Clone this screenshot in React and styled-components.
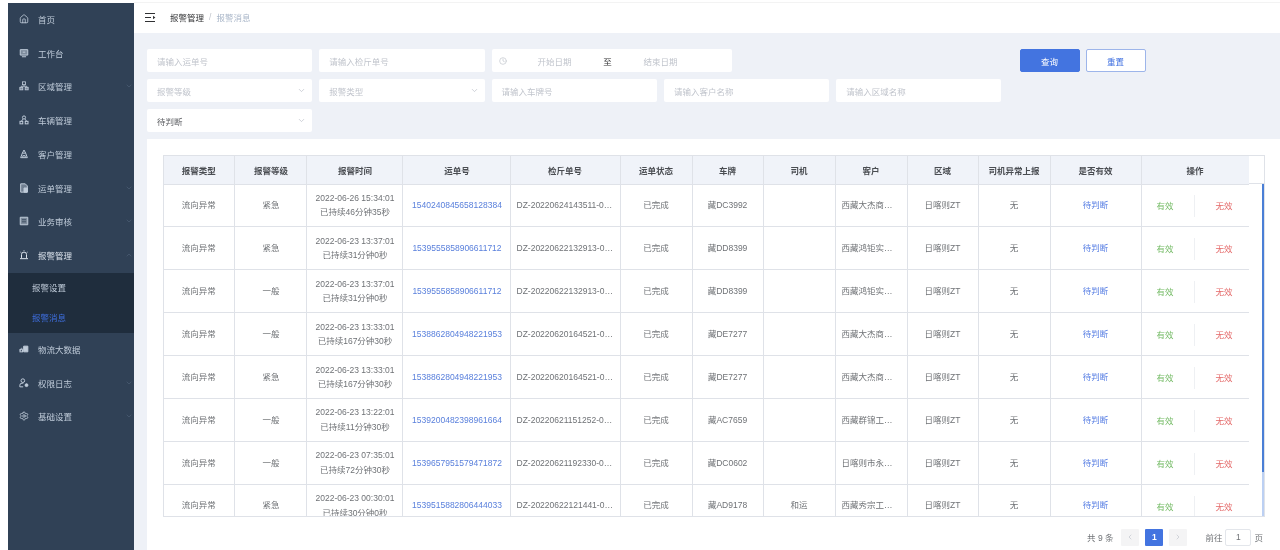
import React from 'react';
import styled, { createGlobalStyle } from 'styled-components';
import { House, Settings, ChevronDown, ChevronUp, ChevronLeft, ChevronRight, Clock } from 'lucide-react';

const GlobalStyle = createGlobalStyle`
    html, body {
        margin: 0;
        padding: 0;
        background: #fff;
        overflow: hidden;
    }
    * {
        box-sizing: border-box;
    }
    body {
        font-family: "Liberation Sans", "Noto Sans CJK SC", sans-serif;
        font-size: 8.5px;
        color: #6f7276;
    }
`;

const Page = styled.div`
    width: 1280px;
    height: 550px;
    display: flex;
    padding: 2px 0 0 8px;
    overflow: hidden;
    filter: blur(0.5px);
`;

const Sidebar = styled.aside`
    width: 126px;
    flex-shrink: 0;
    margin-top: 1px;
    background: #304156;
    display: flex;
    flex-direction: column;
`;

const MenuItem = styled.div`
    height: 33.75px;
    display: flex;
    align-items: center;
    padding: 0 6px 2px 11px;
    color: ${(props) => (props.$open ? '#dbe3ec' : '#bfcbd9')};
    flex-shrink: 0;
    svg.menu-icon {
        width: 10px;
        height: 10px;
        margin-right: 9px;
        flex-shrink: 0;
    }
`;

const MenuLabel = styled.span`
    flex: 1;
`;

const Arrow = styled.span`
    display: flex;
    color: #4d5f75;
    margin-right: -5px;
`;

const SubMenu = styled.div`
    background: #1f2d3d;
`;

const SubItem = styled.div`
    height: 30px;
    display: flex;
    align-items: center;
    padding: 0 0 3px 24px;
    color: ${(props) => (props.$active ? '#3f6fe0' : '#bfcbd9')};
`;

const Main = styled.main`
    flex: 1;
    min-width: 0;
    display: flex;
    flex-direction: column;
    background: #eef1f7;
    border-top: 1px solid #f3f3f3;
`;

const Header = styled.header`
    height: 30px;
    background: #fff;
    display: flex;
    align-items: center;
    padding: 0 0 2px 11px;
    flex-shrink: 0;
`;

const Crumb = styled.span`
    color: ${(props) => (props.$muted ? '#a9b6c8' : '#303133')};
`;

const CrumbSep = styled.span`
    color: #c0c4cc;
    margin: 0 5px;
`;

const Filters = styled.section`
    padding: 16px 0 0 13px;
    height: 106px;
    flex-shrink: 0;
    display: flex;
    flex-direction: column;
    gap: 7px;
`;

const FilterRow = styled.div`
    display: flex;
    gap: 7px;
`;

const Field = styled.div`
    width: ${(props) => props.$width || 165.3}px;
    height: 23px;
    background: #fff;
    border-radius: 2px;
    display: flex;
    align-items: center;
    justify-content: space-between;
    padding: 0 6px 0 10px;
    color: ${(props) => (props.$filled ? '#606266' : '#c0c4cc')};
    svg {
        color: #c0c4cc;
    }
`;

const DateField = styled(Field)`
    justify-content: flex-start;
    padding-left: 7px;
`;

const DateText = styled.span`
    width: 96px;
    text-align: center;
`;

const DateSep = styled.span`
    color: #303133;
    width: 10px;
    text-align: center;
`;

const Buttons = styled.div`
    display: flex;
    gap: 6px;
    margin-left: 281px;
`;

const Button = styled.button`
    width: 60px;
    height: 23px;
    font: inherit;
    border-radius: 2px;
    padding: 0;
    color: ${(props) => (props.$primary ? '#fff' : '#3f6fe0')};
    background: ${(props) => (props.$primary ? '#4374e0' : '#fff')};
    border: 1px solid ${(props) => (props.$primary ? '#4374e0' : '#9db5ea')};
`;

const Card = styled.section`
    flex: 1;
    min-height: 0;
    margin-left: 13px;
    background: #fff;
    padding: 16px 15px 0 16px;
    display: flex;
    flex-direction: column;
`;

const TableFrame = styled.div`
    width: 1102px;
    height: 362px;
    flex-shrink: 0;
    display: flex;
    border: 1px solid #dfe2e8;
    overflow: hidden;
`;

const TableArea = styled.div`
    width: 1085px;
    flex-shrink: 0;
    overflow: hidden;
`;

const Table = styled.table`
    border-collapse: collapse;
    table-layout: fixed;
    width: 1085px;
    tr > :nth-child(2),
    tr > :nth-child(3),
    tr > :nth-child(4) {
        padding-left: 8px;
    }
`;

const Th = styled.th`
    height: 28px;
    background: #f0f3f9;
    color: #4a4d52;
    font-weight: 700;
    font-size: 8.5px;
    text-align: center;
    padding: 0 6px;
    border-right: 1px solid #dfe2e8;
    border-bottom: 1px solid #dfe2e8;
`;

const Td = styled.td`
    height: 42.9px;
    padding: 0 ${(props) => (props.$flush ? 0 : 6)}px;
    text-align: center;
    line-height: 14.5px;
    border-right: 1px solid #dfe2e8;
    border-bottom: 1px solid #dfe2e8;
    color: ${(props) => props.$color || 'inherit'};
`;

const Clip = styled.div`
    overflow: hidden;
    white-space: nowrap;
    text-overflow: ellipsis;
`;

const Actions = styled.div`
    display: flex;
    align-items: center;
    padding-top: 2px;
`;

const ActionValid = styled.span`
    width: 53px;
    flex-shrink: 0;
    padding-right: 5px;
    color: #75bb66;
    line-height: 22px;
    border-right: 1px solid #eef0f3;
`;

const ActionInvalid = styled.span`
    flex: 1;
    padding-left: 5px;
    color: #e46a6a;
    line-height: 22px;
`;

const Gutter = styled.div`
    flex: 1;
    display: flex;
    flex-direction: column;
    align-items: flex-end;
`;

const GutterHead = styled.div`
    height: 28px;
    width: 100%;
    flex-shrink: 0;
    border-bottom: 1px solid #dfe2e8;
`;

const ScrollTrack = styled.div`
    width: 2px;
    flex: 1;
    background: #bcd0f3;
`;

const ScrollThumb = styled.div`
    height: 288px;
    background: #4a7fd6;
`;

const Pager = styled.div`
    display: flex;
    justify-content: flex-end;
    align-items: center;
    height: 28px;
    margin-top: 7px;
    padding-right: 2px;
    width: 1102px;
`;

const PagerBox = styled.span`
    width: 18px;
    height: 17px;
    margin-left: ${(props) => props.$gap || 6}px;
    border-radius: 1px;
    display: flex;
    align-items: center;
    justify-content: center;
    font-weight: 700;
    background: ${(props) => (props.$active ? '#4374e0' : '#f4f4f5')};
    color: ${(props) => (props.$active ? '#fff' : '#c0c4cc')};
`;

const JumpLabel = styled.span`
    margin-left: ${(props) => props.$gap || 0}px;
`;

const JumpInput = styled.span`
    width: 26px;
    height: 17px;
    margin: 0 3px;
    border: 1px solid #e3e6eb;
    border-radius: 2px;
    display: flex;
    align-items: center;
    justify-content: center;
`;

const Svg = ({ children, ...rest }) => (
    <svg
        className="menu-icon"
        viewBox="0 0 12 12"
        fill="none"
        stroke="currentColor"
        strokeWidth="1.2"
        {...rest}
    >
        {children}
    </svg>
);

const DeskIcon = () => (
    <Svg>
        <path d="M1.5 2h9v6.5h-9z" fill="currentColor" fillOpacity=".55" />
        <path d="M4.5 5h3M3.5 10.5h5" />
    </Svg>
);

const AreaIcon = () => (
    <Svg strokeWidth="1">
        <rect x="4.2" y="1" width="3.6" height="3.4" />
        <path d="M6 4.4v2M2.6 7.2V6.3h6.8v.9" />
        <rect x="1" y="7.6" width="3.6" height="3" fill="currentColor" fillOpacity=".5" />
        <rect x="7.4" y="7.6" width="3.6" height="3" fill="currentColor" fillOpacity=".5" />
    </Svg>
);

const CarIcon = () => (
    <Svg>
        <circle cx="6" cy="3" r="1.9" />
        <path d="M4.6 5 3 7.4M7.4 5 9 7.4" />
        <rect x="1.2" y="7.6" width="3.3" height="3" />
        <rect x="7.5" y="7.6" width="3.3" height="3" />
    </Svg>
);

const CustomerIcon = () => (
    <Svg>
        <path d="M6 1.2 8 5H4z" />
        <path d="M4 5 2 10.4h8L8 5" />
        <path d="M4.6 10.4V8h2.8v2.4" />
    </Svg>
);

const WaybillIcon = () => (
    <Svg>
        <path d="M2 1h5.5L10 3.5V11H2z" fill="currentColor" fillOpacity=".45" />
        <path d="M6 6h4v5H6z" fill="currentColor" />
    </Svg>
);

const AuditIcon = () => (
    <Svg>
        <path d="M1.5 1.5h9v9h-9z" fill="currentColor" fillOpacity=".55" />
        <path d="M3.5 4.5h5M3.5 7h5" stroke="#304156" strokeWidth="1" />
    </Svg>
);

const AlarmIcon = () => (
    <Svg>
        <path d="M3 9.5V5.5a3 3 0 0 1 6 0v4" />
        <path d="M1.2 10.4h9.6M6 1V.2M1.8 2.6l1 .8M10.2 2.6l-1 .8" />
    </Svg>
);

const DataIcon = () => (
    <Svg>
        <path d="M1.5 8a2.2 2.2 0 0 1 2.6-2.8" />
        <rect x="1.2" y="6.8" width="3" height="2.6" />
        <path d="M5.6 2.6h5v6.8h-5z" fill="currentColor" />
    </Svg>
);

const LogIcon = () => (
    <Svg>
        <circle cx="4.6" cy="3.2" r="2.2" />
        <path d="M1 10.6V8.8a2.6 2.6 0 0 1 2.6-2.6h1.6" />
        <path d="M1 10.6h4" />
        <circle cx="9" cy="8.6" r="1.7" fill="currentColor" />
    </Svg>
);

const CollapseIcon = () => (
    <svg width="11" height="9" viewBox="0 0 11 9" fill="none" stroke="#303133" strokeWidth="1" style={{ marginRight: 14 }}>
        <path d="M0 .5h10M0 4.5h6M0 8.5h10" />
        <path d="M8 2.8 10.4 4.5 8 6.2z" fill="#303133" stroke="none" />
    </svg>
);

const menuTop = [
    { label: '首页', icon: House },
    { label: '工作台', icon: DeskIcon },
    { label: '区域管理', icon: AreaIcon, more: true },
    { label: '车辆管理', icon: CarIcon },
    { label: '客户管理', icon: CustomerIcon },
    { label: '运单管理', icon: WaybillIcon, more: true },
    { label: '业务审核', icon: AuditIcon, more: true },
];

const menuBottom = [
    { label: '物流大数据', icon: DataIcon },
    { label: '权限日志', icon: LogIcon, more: true },
    { label: '基础设置', icon: Settings, more: true },
];

const columns = [
    ['报警类型', 70],
    ['报警等级', 72],
    ['报警时间', 96],
    ['运单号', 108],
    ['检斤单号', 110],
    ['运单状态', 72],
    ['车牌', 71],
    ['司机', 72],
    ['客户', 72],
    ['区域', 71],
    ['司机异常上报', 72],
    ['是否有效', 91],
    ['操作', 108],
];

const rows = [
    ['紧急', '2022-06-26 15:34:01', '已持续46分钟35秒', '1540240845658128384', 'DZ-20220624143511-0001', '藏DC3992', '', '西藏大杰商贸有限公司'],
    ['紧急', '2022-06-23 13:37:01', '已持续31分钟0秒', '1539555858906611712', 'DZ-20220622132913-0001', '藏DD8399', '', '西藏鸿钜实业有限公司'],
    ['一般', '2022-06-23 13:37:01', '已持续31分钟0秒', '1539555858906611712', 'DZ-20220622132913-0001', '藏DD8399', '', '西藏鸿钜实业有限公司'],
    ['一般', '2022-06-23 13:33:01', '已持续167分钟30秒', '1538862804948221953', 'DZ-20220620164521-0001', '藏DE7277', '', '西藏大杰商贸有限公司'],
    ['紧急', '2022-06-23 13:33:01', '已持续167分钟30秒', '1538862804948221953', 'DZ-20220620164521-0001', '藏DE7277', '', '西藏大杰商贸有限公司'],
    ['一般', '2022-06-23 13:22:01', '已持续11分钟30秒', '1539200482398961664', 'DZ-20220621151252-0001', '藏AC7659', '', '西藏群锦工贸有限公司'],
    ['一般', '2022-06-23 07:35:01', '已持续72分钟30秒', '1539657951579471872', 'DZ-20220621192330-0001', '藏DC0602', '', '日喀则市永盛有限公司'],
    ['紧急', '2022-06-23 00:30:01', '已持续30分钟0秒', '1539515882806444033', 'DZ-20220622121441-0001', '藏AD9178', '和运', '西藏秀宗工贸有限公司'],
];

const renderMenu = (list) =>
    list.map((m) => (
        <MenuItem key={m.label}>
            {m.icon === House || m.icon === Settings ? <m.icon className="menu-icon" strokeWidth={2} /> : <m.icon />}
            <MenuLabel>{m.label}</MenuLabel>
            {m.more && (
                <Arrow>
                    <ChevronDown size={8} />
                </Arrow>
            )}
        </MenuItem>
    ));

const App = () => {
    return (
        <Page>
            <GlobalStyle />
            <Sidebar>
                {renderMenu(menuTop)}
                <MenuItem $open>
                    <AlarmIcon />
                    <MenuLabel>报警管理</MenuLabel>
                    <Arrow>
                        <ChevronUp size={8} />
                    </Arrow>
                </MenuItem>
                <SubMenu>
                    <SubItem>报警设置</SubItem>
                    <SubItem $active>报警消息</SubItem>
                </SubMenu>
                {renderMenu(menuBottom)}
            </Sidebar>
            <Main>
                <Header>
                    <CollapseIcon />
                    <Crumb>报警管理</Crumb>
                    <CrumbSep>/</CrumbSep>
                    <Crumb $muted>报警消息</Crumb>
                </Header>
                <Filters>
                    <FilterRow>
                        <Field>请输入运单号</Field>
                        <Field>请输入检斤单号</Field>
                        <DateField $width={240}>
                            <Clock size={8} />
                            <DateText>开始日期</DateText>
                            <DateSep>至</DateSep>
                            <DateText>结束日期</DateText>
                        </DateField>
                        <Buttons>
                            <Button $primary>查询</Button>
                            <Button>重置</Button>
                        </Buttons>
                    </FilterRow>
                    <FilterRow>
                        <Field>
                            报警等级
                            <ChevronDown size={9} />
                        </Field>
                        <Field>
                            报警类型
                            <ChevronDown size={9} />
                        </Field>
                        <Field>请输入车牌号</Field>
                        <Field>请输入客户名称</Field>
                        <Field>请输入区域名称</Field>
                    </FilterRow>
                    <FilterRow>
                        <Field $filled>
                            待判断
                            <ChevronDown size={9} />
                        </Field>
                    </FilterRow>
                </Filters>
                <Card>
                    <TableFrame>
                        <TableArea>
                            <Table>
                                <colgroup>
                                    {columns.map(([name, w]) => (
                                        <col key={name} width={w} />
                                    ))}
                                </colgroup>
                                <thead>
                                    <tr>
                                        {columns.map(([name]) => (
                                            <Th key={name}>{name}</Th>
                                        ))}
                                    </tr>
                                </thead>
                                <tbody>
                                    {rows.map((r, i) => (
                                        <tr key={i}>
                                            <Td>流向异常</Td>
                                            <Td>{r[0]}</Td>
                                            <Td>
                                                {r[1]}
                                                <br />
                                                {r[2]}
                                            </Td>
                                            <Td $color="#5a80dc">{r[3]}</Td>
                                            <Td>
                                                <Clip>{r[4]}</Clip>
                                            </Td>
                                            <Td>已完成</Td>
                                            <Td>{r[5]}</Td>
                                            <Td>{r[6]}</Td>
                                            <Td>
                                                <Clip>{r[7]}</Clip>
                                            </Td>
                                            <Td>日喀则ZT</Td>
                                            <Td>无</Td>
                                            <Td $color="#5a80e4">待判断</Td>
                                            <Td $flush>
                                                <Actions>
                                                    <ActionValid>有效</ActionValid>
                                                    <ActionInvalid>无效</ActionInvalid>
                                                </Actions>
                                            </Td>
                                        </tr>
                                    ))}
                                </tbody>
                            </Table>
                        </TableArea>
                        <Gutter>
                            <GutterHead />
                            <ScrollTrack>
                                <ScrollThumb />
                            </ScrollTrack>
                        </Gutter>
                    </TableFrame>
                    <Pager>
                        <span>共 9 条</span>
                        <PagerBox $gap={8}>
                            <ChevronLeft size={8} />
                        </PagerBox>
                        <PagerBox $active>1</PagerBox>
                        <PagerBox>
                            <ChevronRight size={8} />
                        </PagerBox>
                        <JumpLabel $gap={18}>前往</JumpLabel>
                        <JumpInput>1</JumpInput>
                        <span>页</span>
                    </Pager>
                </Card>
            </Main>
        </Page>
    );
};

export default App;
